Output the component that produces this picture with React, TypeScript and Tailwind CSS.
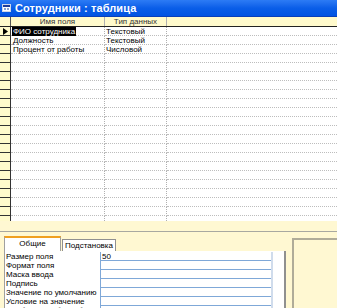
import React from "react";

const dataRows = [
  ["ФИО сотрудника", "Текстовый"],
  ["Должность", "Текстовый"],
  ["Процент от работы", "Числовой"],
];

const props = [
  ["Размер поля", "50"],
  ["Формат поля", ""],
  ["Маска ввода", ""],
  ["Подпись", ""],
  ["Значение по умолчанию", ""],
  ["Условие на значение", ""],
  ["Сообщение об ошибке", ""],
];

export default function App() {
  const emptyCount = 22;
  return (
    <div
      className="w-[337px] h-[308px] overflow-hidden bg-[#fff8d2] flex flex-col text-[8px] leading-[9px] text-black"
      style={{ fontFamily: "'Liberation Sans', Arial, sans-serif" }}
    >
      {/* Title bar */}
      <div className="h-[17px] shrink-0 flex items-center gap-[4px] pl-[2px] bg-gradient-to-b from-[#2c7bf5] via-[#0a5ee8] to-[#0254e2] border-b border-[#0a3fb8]">
        <div className="w-[9px] h-[8px] bg-white border border-[#d0d8e8] flex flex-col">
          <div className="h-[2px] bg-[#1e3c9a]" />
          <div className="flex-1 grid grid-cols-2 gap-[1px] p-[1px]">
            <div className="bg-[#8aa4d8]" />
            <div className="bg-[#8aa4d8]" />
          </div>
        </div>
        <span className="text-white font-bold text-[11px] leading-[14px] tracking-[0.1px]">
          Сотрудники : таблица
        </span>
      </div>

      {/* Grid */}
      <div className="h-[204px] shrink-0 flex flex-col overflow-hidden bg-white">
        {/* header */}
        <div className="h-[10px] shrink-0 flex bg-[#fffacc] border-b border-[#222]">
          <div className="w-[11px] border-r border-[#555]" />
          <div className="w-[94px] border-r border-[#b0b0b0] text-center leading-[9px] text-[#333]">Имя поля</div>
          <div className="w-[62px] border-r border-[#b0b0b0] text-center leading-[9px] text-[#333]">Тип данных</div>
          <div className="flex-1" />
        </div>
        {dataRows.map((r, i) => (
          <div key={i} className="h-[9px] shrink-0 flex">
            <div className="w-[11px] bg-[#fffacc] border-r border-[#333] border-b border-b-[#333] flex items-center justify-center">
              {i === 0 && (
                <svg width="5" height="7" viewBox="0 0 5 7">
                  <path d="M0 0 L5 3.5 L0 7 Z" fill="#000" />
                </svg>
              )}
            </div>
            <div className="w-[94px] border-r border-[#b0b0b0] border-b border-dotted border-b-[#bdbdbd] pl-[1px] whitespace-nowrap">
              {i === 0 ? (
                <span className="bg-black text-white px-[1px]">{r[0]}</span>
              ) : (
                <span className="px-[1px]">{r[0]}</span>
              )}
            </div>
            <div className="w-[62px] border-r border-[#b0b0b0] border-b border-dotted border-b-[#bdbdbd] pl-[1px] whitespace-nowrap">
              {r[1]}
            </div>
            <div className="flex-1 border-b border-dotted border-b-[#bdbdbd]" />
          </div>
        ))}
        {Array.from({ length: emptyCount }).map((_, i) => (
          <div key={"e" + i} className="h-[9px] shrink-0 flex">
            <div className="w-[11px] bg-[#fffacc] border-r border-[#333] border-b border-b-[#333]" />
            <div className="w-[94px] border-r border-[#b0b0b0] border-b border-dotted border-b-[#bdbdbd]" />
            <div className="w-[62px] border-r border-[#b0b0b0] border-b border-dotted border-b-[#bdbdbd]" />
            <div className="flex-1 border-b border-dotted border-b-[#bdbdbd]" />
          </div>
        ))}
      </div>

      {/* Lower area */}
      <div className="flex-1 flex flex-col bg-[#fff8d2]">
        <div className="h-[11px] shrink-0 border-b border-[#a8a8a0]" />
        <div className="flex-1 flex pt-[4px]">
          <div className="flex flex-col ml-[4px] w-[282px]">
            {/* tabs */}
            <div className="flex items-end h-[15px] shrink-0">
              <div className="w-[57px] h-[15px] bg-white border-t-2 border-t-[#f0a020] border-l border-[#a0a0a0] border-r border-r-[#a0a0a0] text-center leading-[11px]">
                Общие
              </div>
              <div className="w-[54px] h-[12px] bg-white border border-[#909090] border-b-0 text-center leading-[11px] ml-[1px]">
                Подстановка
              </div>
            </div>
            <div className="flex-1 bg-white border-l border-[#a0a0a0] border-r-2 border-r-[#909090] flex pt-[1px]">
              <div className="w-[95px] shrink-0 pl-[1px]">
                {props.map((p, i) => (
                  <div key={i} className="h-[9px] whitespace-nowrap">{p[0]}</div>
                ))}
              </div>
              <div className="w-[171px] shrink-0">
                {props.map((p, i) => (
                  <div key={i} className="h-[9px] border-b border-[#7fa8d8] border-l border-l-[#7fa8d8] pl-[1px]">
                    {p[1]}
                  </div>
                ))}
              </div>
              <div className="w-[2px] bg-[#d0dcec]" />
            </div>
          </div>
          <div className="flex-1 ml-[6px] mt-[2px] border-l-2 border-t-2 border-[#b0ac98]" />
        </div>
      </div>
    </div>
  );
}
